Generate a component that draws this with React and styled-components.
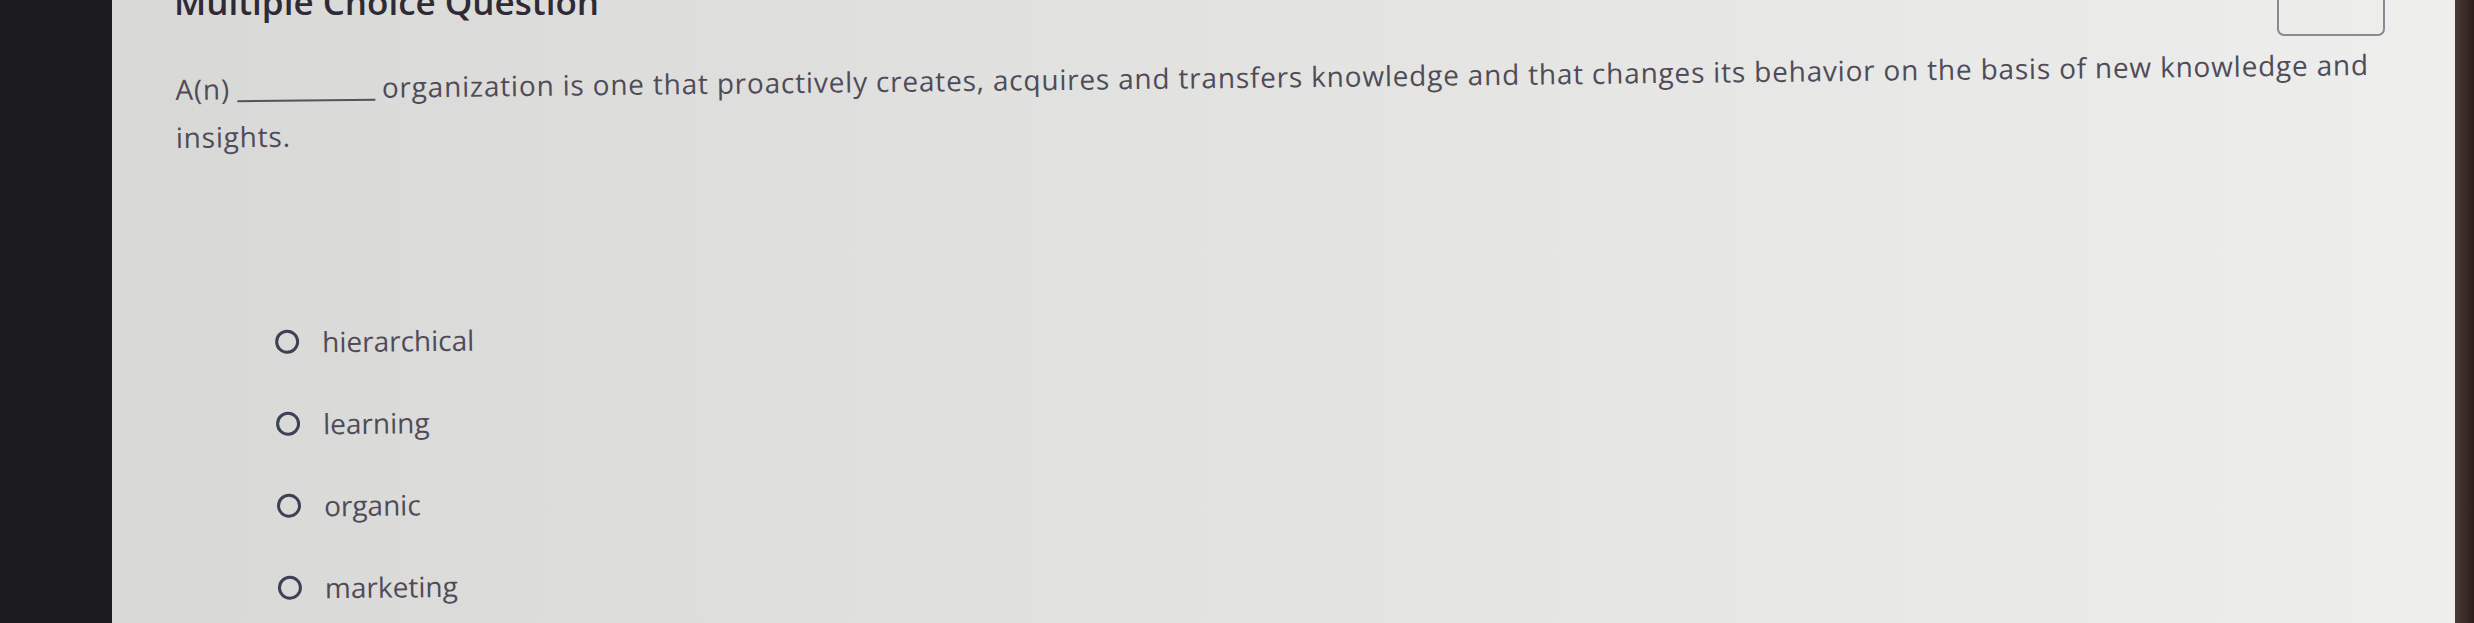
import styled, { createGlobalStyle } from "styled-components";

const GlobalStyle = createGlobalStyle`
  html, body {
    margin: 0;
    padding: 0;
    background: #1a1a1c;
  }
  body {
    font-family: "Open Sans", "Liberation Sans", sans-serif;
  }
`;

const Page = styled.div`
  width: 2474px;
  height: 623px;
  display: flex;
  overflow: hidden;
`;

const Bezel = styled.div`
  flex: 0 0 ${(p) => p.$width}px;
  background: ${(p) => p.$color};
`;

const Screen = styled.div`
  flex: 1;
  overflow: hidden;
  padding-left: 63px;
  padding-right: 70px;
  background: linear-gradient(
    90deg,
    #d8d8d6 0%,
    #dfdfdd 30%,
    #e5e5e3 60%,
    #eaeae8 85%,
    #eeeeec 100%
  );
`;

const Header = styled.div`
  display: flex;
  justify-content: space-between;
  align-items: flex-start;
  height: 63px;
  margin-top: -30px;
`;

const Title = styled.h2`
  margin: 15px 0 0 -1px;
  font-size: 35px;
  line-height: 34px;
  font-weight: 600;
  color: #2e2a36;
`;

const ScoreBox = styled.div`
  width: 104px;
  height: 50px;
  margin-top: 12px;
  border: 2px solid #8c8891;
  border-radius: 7px;
`;

const Body = styled.div`
  transform: rotate(-0.65deg);
  transform-origin: 0 0;
`;

const Question = styled.p`
  margin: 32px 0 0;
  width: 2240px;
  font-size: 28px;
  line-height: 48px;
  letter-spacing: 0.8px;
  color: #4f4b58;
`;

const Blank = styled.span`
  display: inline-block;
  width: 138px;
  height: 1em;
  margin: 0 7px -3px;
  border-bottom: 2px solid #55515d;
`;

const Options = styled.div`
  display: flex;
  flex-direction: column;
  margin-top: 141px;
  padding-left: 97px;
`;

const Option = styled.label`
  display: flex;
  align-items: center;
  gap: 23px;
  height: 82px;
  font-size: 28px;
  color: #4f4b58;
`;

const Radio = styled.span`
  width: 18px;
  height: 18px;
  border: 3px solid #3c4156;
  border-radius: 50%;
  flex: 0 0 auto;
`;

const choices = ["hierarchical", "learning", "organic", "marketing"];

export default function App() {
  return (
    <>
      <GlobalStyle />
      <Page>
        <Bezel $width={112} $color="#1b1b1d" />
        <Screen>
          <Header>
            <Title>Multiple Choice Question</Title>
            <ScoreBox />
          </Header>
          <Body>
            <Question>
              A(n)
              <Blank />
              organization is one that proactively creates, acquires and
              transfers knowledge and that changes its behavior on the basis of
              new knowledge and insights.
            </Question>
            <Options>
              {choices.map((c) => (
                <Option key={c}>
                  <Radio />
                  {c}
                </Option>
              ))}
            </Options>
          </Body>
        </Screen>
        <Bezel $width={19} $color="linear-gradient(90deg, #4a3a32, #2a1d18)" />
      </Page>
    </>
  );
}
